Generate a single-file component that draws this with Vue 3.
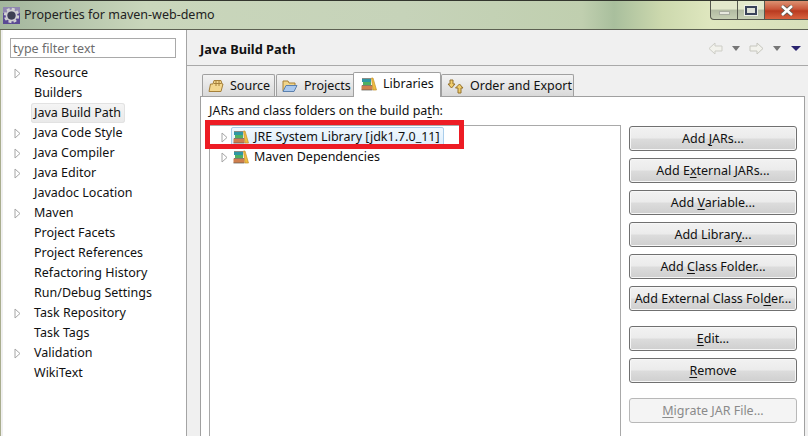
<script setup>
const nav = [
  ['Resource', true], ['Builders', false], ['Java Build Path', false, true], ['Java Code Style', true],
  ['Java Compiler', true], ['Java Editor', true], ['Javadoc Location', false], ['Maven', true],
  ['Project Facets', false], ['Project References', false], ['Refactoring History', false],
  ['Run/Debug Settings', false], ['Task Repository', true], ['Task Tags', false], ['Validation', true], ['WikiText', false]
]
const btnGroups = [
  [['Add ', 'J', 'ARs...'], ['Add E', 'x', 'ternal JARs...'], ['Add ', 'V', 'ariable...'], ['Add Librar', 'y', '...'], ['Add ', 'C', 'lass Folder...'], ['Add External Class Fol', 'd', 'er...']],
  [['', 'E', 'dit...'], ['', 'R', 'emove']],
  [['', 'M', 'igrate JAR File...']]
]
</script>

<template>
  <div class="win">
    <header class="title">
      <svg class="logo" width="17" height="17" viewBox="0 0 17 17">
        <rect width="17" height="17" fill="#5a4a94" />
        <rect x="0" y="0" width="17" height="6" fill="#8f86b0" />
        <circle cx="8.5" cy="8.5" r="6.6" fill="none" stroke="#d4d4d4" stroke-width="2.2" stroke-dasharray="3 2.2" />
        <circle cx="8.5" cy="8.5" r="5" fill="none" stroke="#cfcfcf" stroke-width="1.8" />
        <circle cx="8.5" cy="8.5" r="3.9" fill="#3d3f52" />
      </svg>
      <span class="title-text">Properties for maven-web-demo</span>
      <div class="controls">
        <div class="ctl ctl-min"><i></i></div>
        <div class="ctl ctl-max"><i></i></div>
        <div class="ctl ctl-close">
          <svg width="14" height="11" viewBox="0 0 14 11"><path d="M2 1 L12 10 M12 1 L2 10" stroke="#5a5a50" stroke-width="4.2" /><path d="M2 1 L12 10 M12 1 L2 10" stroke="#fff" stroke-width="2.6" /></svg>
        </div>
      </div>
    </header>
    <div class="body">
      <aside class="side">
        <div class="filter">type filter text</div>
        <ul class="tree">
          <li v-for="n in nav" :key="n[0]" class="row">
            <svg v-if="n[1]" class="arrow" width="7" height="11" viewBox="0 0 7 11"><path d="M1 1 L6 5.5 L1 10 Z" fill="#fff" stroke="#a6a6a6" /></svg>
            <span v-else class="arrow"></span>
            <span class="lbl" :class="{ sel: n[2] }">{{ n[0] }}</span>
          </li>
        </ul>
      </aside>
      <main class="main">
        <div class="head">
          <b>Java Build Path</b>
          <div class="navs">
            <svg width="15" height="13" viewBox="0 0 15 13"><path d="M1 6.5 L7 1 V4 H14 V9 H7 V12 Z" fill="#f2f2ec" stroke="#cdcdc6" /></svg>
            <span class="tri"></span>
            <svg class="fwd" width="15" height="13" viewBox="0 0 15 13"><path d="M14 6.5 L8 1 V4 H1 V9 H8 V12 Z" fill="#f2f2ec" stroke="#c6c6be" /></svg>
            <span class="tri"></span>
            <span class="tri blue"></span>
          </div>
        </div>
        <div class="tabs">
          <div class="tab t1">
            <svg width="16" height="14" viewBox="0 0 16 14"><path d="M1 12.5 L2.5 5 H5 L6 1.5 H13 L14 5 H15 L13 12.5 Z" fill="#f3d78f" stroke="#a5803a" /><path d="M8 2 V7 M11 2 V7 M6 4.5 H13.5" stroke="#a5803a" /></svg>
            <span>Source</span>
          </div>
          <div class="tab t2">
            <svg width="16" height="14" viewBox="0 0 16 14"><path d="M1 12 V2 H6 L7 4 H13 V6" fill="#f0d58a" stroke="#a57f35" /><path d="M1 12.5 L4 6.5 H15 L12 12.5 Z" fill="#a9c8ee" stroke="#5b80ad" /></svg>
            <span>Projects</span>
          </div>
          <div class="tab t3">
            <svg width="16" height="14" viewBox="0 0 16 14"><rect x="1" y="2" width="9" height="3" fill="#2f97a4"/><rect x="2" y="5" width="8" height="3" fill="#4fb062"/><rect x="0.5" y="8.5" width="11" height="4.5" fill="#cf7f4e"/><path d="M1 1.5 H10 M1 8.5 H11 M0.5 13 H11.5" stroke="#5a5a50" stroke-width=".7"/><path d="M10.5 1 L12 1 L15.5 13 L12 13 Z" fill="#f0bd40" stroke="#c2912a" stroke-width=".7"/></svg>
            <span>Libraries</span>
          </div>
          <div class="tab t4">
            <svg width="17" height="15" viewBox="0 0 17 15"><path d="M3 1 H6 V5 H8 L4.5 9 L1 5 H3 Z" fill="#f0cd6c" stroke="#94702a" /><path d="M11 14 V9 H8.5 L12.5 5 L16 9 H14 V14 Z" fill="#f0cd6c" stroke="#94702a" /></svg>
            <span>Order and Export</span>
          </div>
        </div>
        <section class="pane">
          <div class="cap">JARs and class folders on the build pa<u>t</u>h:</div>
          <div class="pane-row">
            <div class="list">
              <div class="lrow">
                <svg class="arrow" width="7" height="11" viewBox="0 0 7 11"><path d="M1 1 L6 5.5 L1 10 Z" fill="#fff" stroke="#a6a6a6" /></svg>
                <span class="picked">
                  <svg width="16" height="14" viewBox="0 0 16 14"><rect x="1" y="2" width="9" height="3" fill="#2f97a4"/><rect x="2" y="5" width="8" height="3" fill="#4fb062"/><rect x="0.5" y="8.5" width="11" height="4.5" fill="#cf7f4e"/><path d="M1 1.5 H10 M1 8.5 H11 M0.5 13 H11.5" stroke="#5a5a50" stroke-width=".7"/><path d="M10.5 1 L12 1 L15.5 13 L12 13 Z" fill="#f0bd40" stroke="#c2912a" stroke-width=".7"/></svg>
                  <span>JRE System Library [jdk1.7.0_11]</span>
                </span>
              </div>
              <div class="lrow">
                <svg class="arrow" width="7" height="11" viewBox="0 0 7 11"><path d="M1 1 L6 5.5 L1 10 Z" fill="#fff" stroke="#a6a6a6" /></svg>
                <span class="plain">
                  <svg width="16" height="14" viewBox="0 0 16 14"><rect x="1" y="2" width="9" height="3" fill="#2f97a4"/><rect x="2" y="5" width="8" height="3" fill="#4fb062"/><rect x="0.5" y="8.5" width="11" height="4.5" fill="#cf7f4e"/><path d="M1 1.5 H10 M1 8.5 H11 M0.5 13 H11.5" stroke="#5a5a50" stroke-width=".7"/><path d="M10.5 1 L12 1 L15.5 13 L12 13 Z" fill="#f0bd40" stroke="#c2912a" stroke-width=".7"/></svg>
                  <span>Maven Dependencies</span>
                </span>
              </div>
              <div class="redbox"></div>
            </div>
            <div class="btns">
              <div v-for="(g, gi) in btnGroups" :key="gi" class="grp">
                <button v-for="b in g" :key="b.join('')" class="btn" :class="{ off: gi === 2 }">{{ b[0] }}<u>{{ b[1] }}</u>{{ b[2] }}</button>
              </div>
            </div>
          </div>
        </section>
      </main>
    </div>
  </div>
</template>

<style scoped>
.win { width: 808px; height: 436px; overflow: hidden; display: flex; flex-direction: column; font: 12.5px/18px "Noto Sans", "Open Sans", sans-serif; color: #111; background: #f0f0f0; }
.title { height: 30px; flex: none; box-sizing: border-box; display: flex; align-items: flex-start; border-top: 1px solid #33362e; border-bottom: 1px solid #5d6152;
  background: linear-gradient(90deg, #a3b69d 0, #c9d6bb 18%, #c6d3b9 50%, #c0cfaf 72%, #a9bf9d 76%, #cdd9ae 82%, #dfe7bf 88%, #d7dfbb 100%); }
.logo { margin: 6px 0 0 3px; flex: none; }
.title-text { margin: 5px 0 0 4px; color: #222; }
.controls { margin-left: auto; display: flex; height: 19px; }
.ctl { box-sizing: border-box; height: 19px; display: flex; align-items: center; justify-content: center; border-bottom: 1px solid #55584e; border-right: 1px solid #55584e; }
.ctl-min { width: 28px; border-left: 1px solid #55584e; border-bottom-left-radius: 4px; background: linear-gradient(#e3e9cc 45%, #b2bba2 50%, #c6cfb4); }
.ctl-min i { width: 11px; height: 4px; margin-top: 5px; background: #e6e8de; border: 1px solid #a8aca0; box-sizing: border-box; }
.ctl-max { width: 27px; background: linear-gradient(#e3e9cc 45%, #b2bba2 50%, #c6cfb4); }
.ctl-max i { width: 12px; height: 9px; border: 2px solid #39435a; background: #dfe2d8; box-sizing: border-box; outline: 1px solid #eef0e6; }
.ctl-close { width: 43px; border-right: 0; background: linear-gradient(#dc9272 0, #c9563a 45%, #b93a20 55%, #d8633f 100%); }
.body { flex: 1; display: flex; min-height: 0; padding-left: 2px; border-left: 1px solid #a9ad8e; }
.side { width: 184px; box-sizing: border-box; background: #fff; border-right: 1px solid #a4a4a4; padding: 8px 7px 0; flex: none; }
.filter { width: 166px; height: 20px; box-sizing: border-box; border: 1px solid #a9a9a9; padding-left: 2px; line-height: 20px; color: #6d6d6d; }
.tree { list-style: none; margin: 5px 0 0; padding: 0; }
.row { height: 20px; display: flex; align-items: center; }
.arrow { flex: none; width: 7px; margin-left: 4px; margin-right: 13px; }
.lbl { padding: 0 3px; line-height: 20px; margin-left: -3px; }
.lbl.sel { background: linear-gradient(#f5f5f5, #e9e9e9); border-radius: 3px; box-shadow: inset 0 0 0 1px #e2e2e2; padding: 0 4px 0 3px; }
.main { flex: 1; min-width: 0; padding-left: 13px; }
.head { height: 36px; box-sizing: border-box; border-bottom: 1px solid #a9a9a9; margin-left: -13px; padding-left: 13px; display: flex; align-items: center; font-size: 12.8px; padding-top: 3px; }
.navs { margin-left: auto; margin-right: 7px; margin-top: -2px; display: flex; align-items: center; }
.tri { width: 0; height: 0; border: 4px solid transparent; border-top: 5px solid #767676; border-bottom: 0; margin: 0 0 0 9px; }
.fwd { margin-left: 9px; }
.tri.blue { border-top-color: #2a2470; border-width: 5px 5px 0; margin-left: 10px; }
.tabs { display: flex; margin: 7px 0 0 0; height: 23px; align-items: flex-end; padding-left: 2px; }
.tab { box-sizing: border-box; height: 22px; flex: none; white-space: nowrap; display: flex; align-items: center; gap: 6px; padding: 1px 0 0 5px; border: 1px solid #a0a0a0; border-bottom: 0; border-radius: 2px 2px 0 0; background: linear-gradient(#f3f3f3, #d9d9d9); }
.t1 { width: 73px; }
.t2 { width: 79px; margin-left: 1px; }
.t3 { width: 88px; height: 25px; margin-left: -2px; background: #fff; padding: 0 0 3px 7px; position: relative; z-index: 1; margin-bottom: -1px; }
.t4 { width: 133px; }
.pane { margin-right: 3px; height: 400px; box-sizing: border-box; border: 1px solid #a0a0a0; background: #fff; padding: 0 0 0 8px; }
.cap { height: 28px; line-height: 27px; }
.pane-row { display: flex; }
.list { width: 412px; height: 400px; flex: none; box-sizing: border-box; border: 1px solid #a9a9a9; padding-top: 1px; position: relative; }
.lrow { height: 20px; display: flex; align-items: center; }
.lrow .arrow { margin-left: 11px; margin-right: 3px; }
.picked, .plain { display: flex; align-items: center; gap: 5px; height: 20px; box-sizing: border-box; }
.picked { padding: 0 3px 0 1px; background: linear-gradient(#f1f8fe, #dcedfb); border: 1px solid #a9cdeb; border-radius: 2px; }
.plain { padding-left: 2px; }
.redbox { position: absolute; left: -5px; top: -6px; width: 259px; height: 29px; box-sizing: border-box; border: 5px solid #ed1c24; pointer-events: none; }
.btns { margin-left: 8px; width: 168px; display: flex; flex-direction: column; margin-top: 1px; }
.grp { display: flex; flex-direction: column; gap: 7px; margin-bottom: 15px; }
.btn { width: 168px; height: 25px; padding: 1px 0 0; font: inherit; color: #111; border: 1px solid #707070; border-radius: 3px; background: linear-gradient(#f2f2f2 0, #ebebeb 48%, #dcdcdc 52%, #cfcfcf 100%); box-shadow: inset 0 0 0 1px #f7f7f7; }
.btn.off { border-color: #b8b8b8; background: #f4f4f4; color: #8a8a8a; box-shadow: none; }
u { text-underline-offset: 2px; }
</style>
